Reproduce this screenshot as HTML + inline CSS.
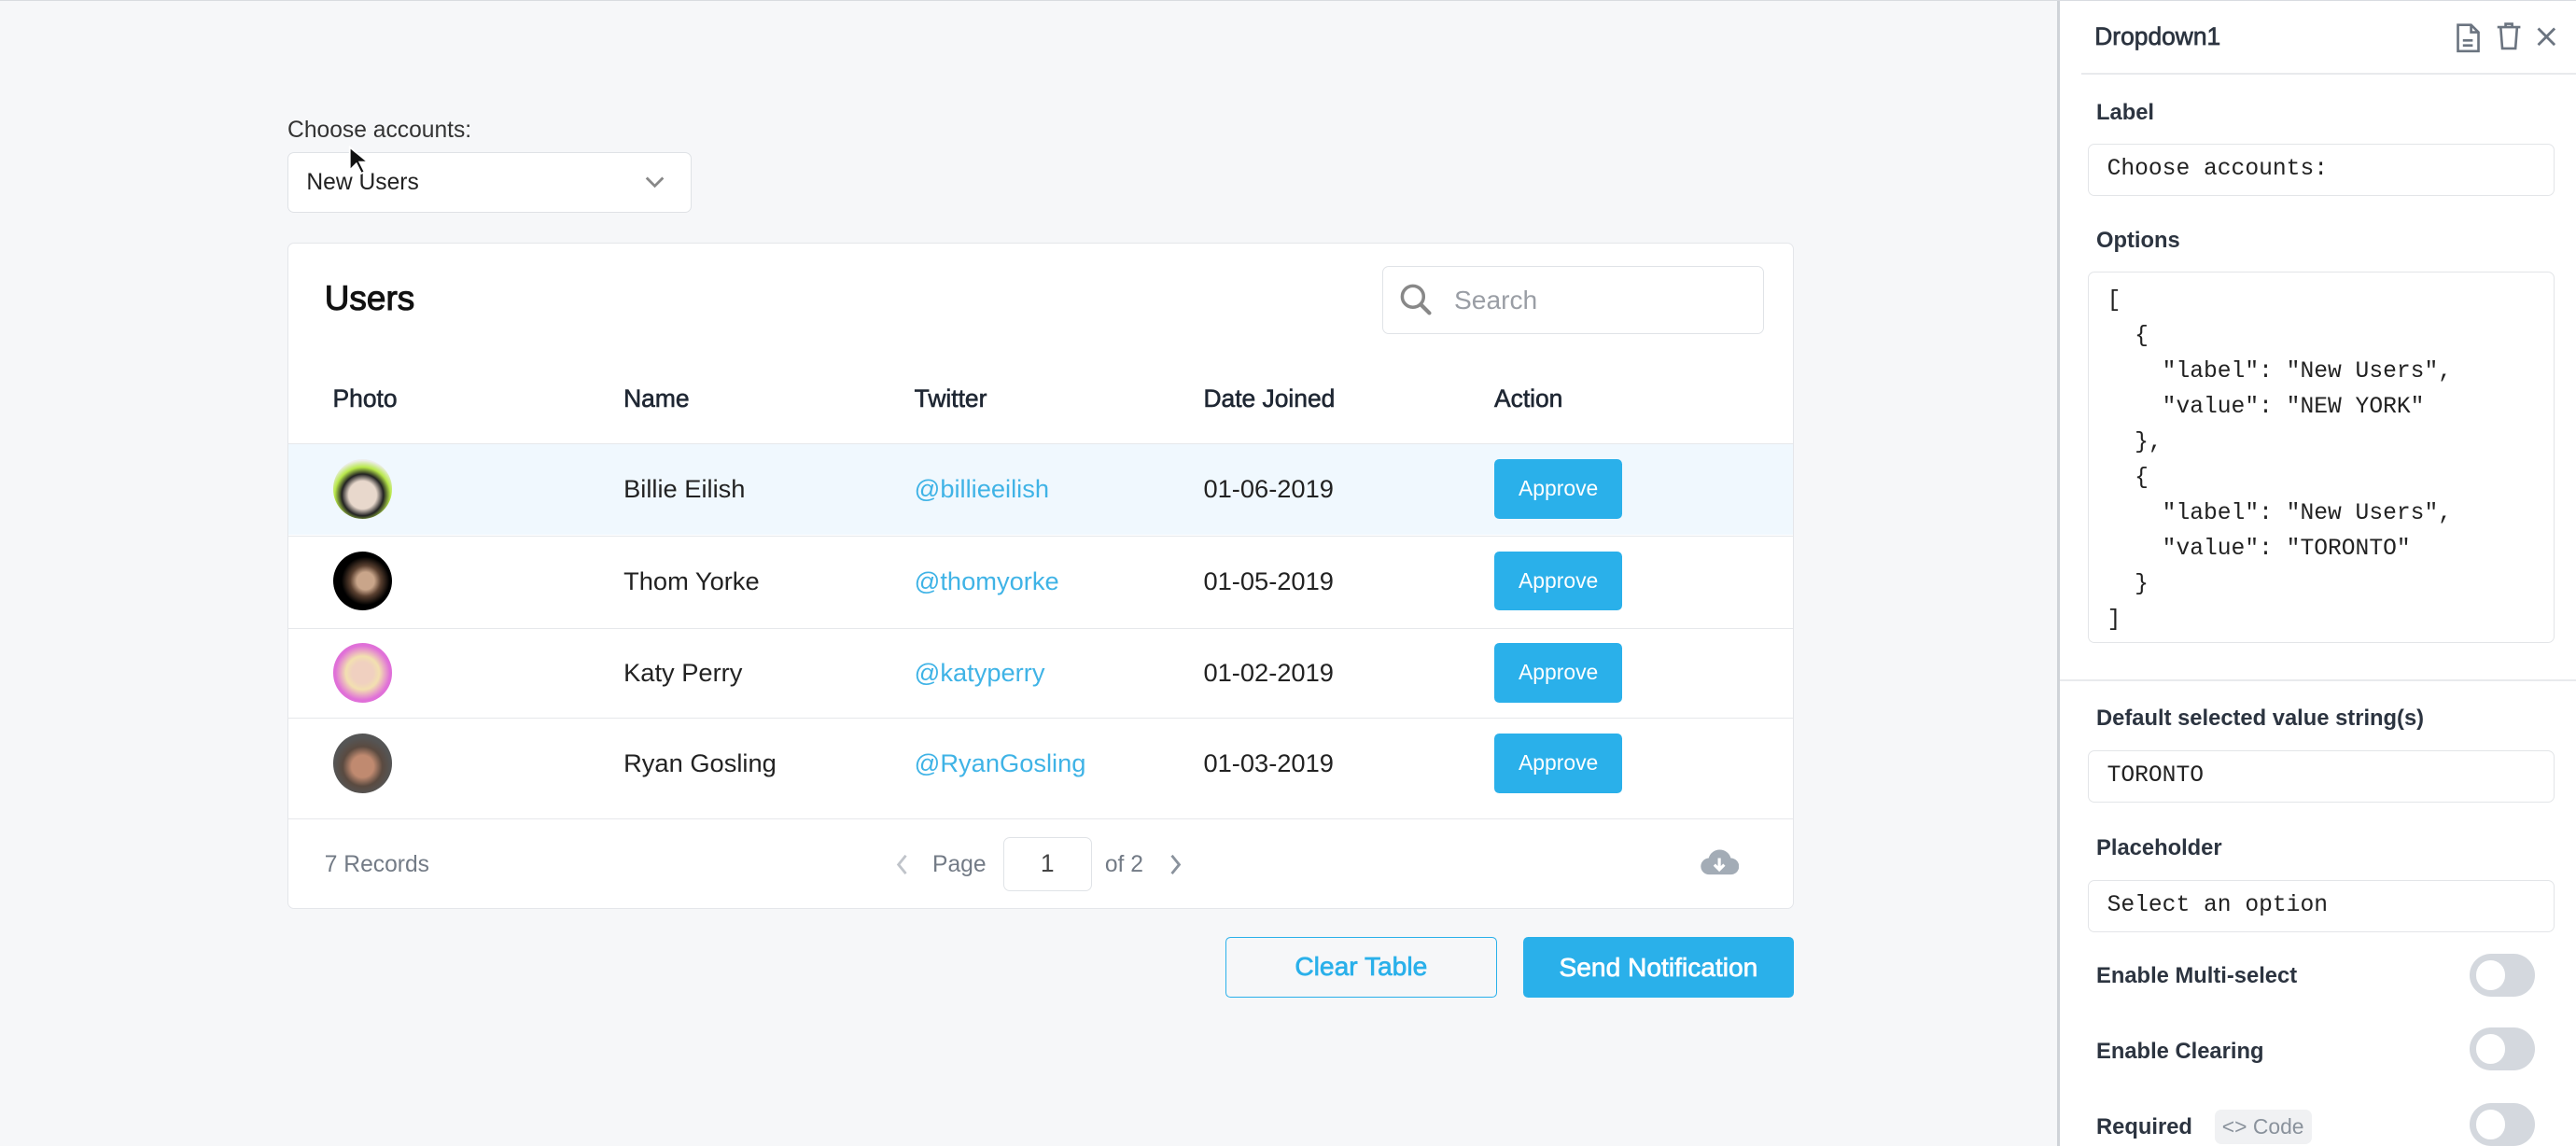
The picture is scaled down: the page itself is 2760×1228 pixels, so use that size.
<!DOCTYPE html>
<html><head><meta charset="utf-8"><style>
html,body{margin:0;padding:0;}
body{width:2760px;height:1226px;overflow:hidden;background:#f6f7f9;font-family:"Liberation Sans",sans-serif;}
#w{zoom:1.7602;width:1568px;height:697px;position:relative;border-top:1px solid #d8dbe0;box-sizing:border-box;}
.a{position:absolute;}
.lbl{font-size:13.5px;font-weight:bold;color:#2c3440;}
.inp{position:absolute;left:1271px;width:284px;background:#fff;border:1px solid #e3e5e8;border-radius:4px;box-sizing:border-box;font-family:"Liberation Mono",monospace;font-size:14px;color:#222;padding-left:11px;}
.tg{position:absolute;left:1503px;width:40px;height:26px;border-radius:13px;background:#d4d8de;}
.tg:after{content:"";position:absolute;left:4px;top:4px;width:18px;height:18px;border-radius:50%;background:#fff;}
.th{position:absolute;top:234px;font-size:15px;color:#1f2733;-webkit-text-stroke:0.35px #1f2733;}
.row{position:absolute;left:0;width:916px;border-top:1px solid #e6e8eb;}
.row span{position:absolute;font-size:15.5px;color:#222;}
.av{position:absolute;left:27px;width:36px;height:36px;border-radius:50%;}
.ap{position:absolute;left:734px;width:78px;height:36px;background:#2ab0ea;border-radius:3px;color:#fff;font-size:13px;text-align:center;line-height:36px;}
.tw{color:#3fb3e6 !important;}
</style></head><body><div id="w">
<div class="a" style="left:175px;top:71px;font-size:14px;color:#333;">Choose accounts:</div>
<div class="a" style="left:175px;top:92px;width:246px;height:37px;background:#fff;border:1px solid #dfe2e6;border-radius:4px;box-sizing:border-box;">
<span class="a" style="left:11px;top:10px;font-size:14px;color:#222;">New Users</span>
<svg class="a" style="left:217px;top:13px" width="12" height="10" viewBox="0 0 12 10"><path d="M1 2l5 5 5-5" stroke="#888" stroke-width="1.6" fill="none"/></svg></div>
<svg class="a" style="left:212px;top:88px" width="12" height="18" viewBox="0 0 12 18"><path d="M1 1v14l4-4 3 6 2-1-3-6h5z" fill="#111" stroke="#fff" stroke-width="1"/></svg>

<div class="a" style="left:175px;top:147px;width:917px;height:406px;background:#fff;border:1px solid #e4e6ea;border-radius:4px;box-sizing:border-box;">
<div class="a" style="left:22px;top:22px;font-size:21px;color:#111;-webkit-text-stroke:0.6px #111;">Users</div>
<div class="a" style="left:666px;top:14px;width:232px;height:41px;border:1px solid #e0e3e7;border-radius:4px;box-sizing:border-box;">
<svg class="a" style="left:9px;top:9px" width="22" height="22" viewBox="0 0 22 22"><circle cx="9" cy="9" r="6.5" stroke="#888" stroke-width="2" fill="none"/><path d="M14 14l5 5" stroke="#888" stroke-width="2.4" stroke-linecap="round"/></svg>
<span class="a" style="left:43px;top:11px;font-size:16px;color:#9a9ea5;">Search</span></div>
<div class="th" style="left:27px;top:86px">Photo</div><div class="th" style="left:204px;top:86px">Name</div><div class="th" style="left:381px;top:86px">Twitter</div><div class="th" style="left:557px;top:86px">Date Joined</div><div class="th" style="left:734px;top:86px">Action</div>
<div class="row" style="top:122px;height:55px;background:#f0f8fe;"><div class="av" style="top:9px;background:radial-gradient(circle at 50% 60%,#e8d8cc 30%,#222 45%,#b8e84a 60%,#eee 75%);"></div><span style="left:204px;top:18px">Billie Eilish</span><span class="tw" style="left:381px;top:18px">@billieeilish</span><span style="left:557px;top:18px">01-06-2019</span><div class="ap" style="top:9px">Approve</div></div>
<div class="row" style="top:178px;height:55px;"><div class="av" style="top:9px;background:radial-gradient(circle at 55% 50%,#c9a58a 20%,#5a4030 35%,#000 55%);"></div><span style="left:204px;top:18px">Thom Yorke</span><span class="tw" style="left:381px;top:18px">@thomyorke</span><span style="left:557px;top:18px">01-05-2019</span><div class="ap" style="top:9px">Approve</div></div>
<div class="row" style="top:234px;height:55px;"><div class="av" style="top:9px;background:radial-gradient(circle at 50% 50%,#f0d0c0 25%,#f2e0b0 40%,#e070d8 65%);"></div><span style="left:204px;top:18px">Katy Perry</span><span class="tw" style="left:381px;top:18px">@katyperry</span><span style="left:557px;top:18px">01-02-2019</span><div class="ap" style="top:9px">Approve</div></div>
<div class="row" style="top:289px;height:61px;"><div class="av" style="top:9px;background:radial-gradient(circle at 50% 55%,#c08a70 25%,#5a4a40 45%,#555 65%);"></div><span style="left:204px;top:18px">Ryan Gosling</span><span class="tw" style="left:381px;top:18px">@RyanGosling</span><span style="left:557px;top:18px">01-03-2019</span><div class="ap" style="top:9px">Approve</div></div>
<div class="row" style="top:350px;height:54px;">
<span style="left:22px;top:20px;font-size:14px;color:#737b86">7 Records</span>
<svg class="a" style="left:370px;top:21px" width="8" height="13" viewBox="0 0 8 13"><path d="M6 1L1.5 6.5 6 12" stroke="#c0c4ca" stroke-width="1.6" fill="none"/></svg>
<span style="left:392px;top:20px;font-size:14px;color:#737b86">Page</span>
<div class="a" style="left:435px;top:11px;width:54px;height:33px;border:1px solid #e0e3e7;border-radius:4px;box-sizing:border-box;text-align:center;line-height:31px;font-size:15px;color:#444;">1</div>
<span style="left:497px;top:20px;font-size:14px;color:#737b86">of 2</span>
<svg class="a" style="left:536px;top:21px" width="8" height="13" viewBox="0 0 8 13"><path d="M2 1l4.5 5.5L2 12" stroke="#8a929c" stroke-width="1.6" fill="none"/></svg>
<svg class="a" style="left:859px;top:18px" width="24" height="18" viewBox="0 0 24 18"><path d="M6 16a5 5 0 0 1-.5-10A7 7 0 0 1 19 6a4.5 4.5 0 0 1 0 10z" fill="#a3acb6"/><path d="M12 6v7M9 10l3 3 3-3" stroke="#fff" stroke-width="1.8" fill="none"/></svg>
</div></div>

<div class="a" style="left:746px;top:570px;width:165px;height:37px;border:1px solid #2ab0ea;border-radius:3px;box-sizing:border-box;text-align:center;line-height:35px;font-size:16px;color:#2ab0ea;-webkit-text-stroke:0.4px #2ab0ea;">Clear Table</div>
<div class="a" style="left:927px;top:570px;width:165px;height:37px;background:#2ab0ea;border-radius:3px;text-align:center;line-height:37px;font-size:16px;color:#fff;-webkit-text-stroke:0.4px #fff;">Send Notification</div>

<div class="a" style="left:1252px;top:0;width:316px;height:697px;background:#fff;border-left:2px solid #cfd3d8;">
<div class="a" style="left:13px;top:44px;width:303px;height:1px;background:#e8eaed;"></div>
<div class="a" style="left:0;top:413px;width:316px;height:1px;background:#e8eaed;"></div>
</div>
<div class="a" style="left:1275px;top:13px;font-size:15px;color:#2c3440;-webkit-text-stroke:0.4px #2c3440;">Dropdown1</div>
<svg class="a" style="left:1494px;top:13px" width="16" height="19" viewBox="0 0 16 19"><path d="M2 1.5h8l4.5 4.5v11.5h-12.5z M10 1.5v4.5h4.5 M5 11h6M5 14h6" stroke="#6b7480" stroke-width="1.5" fill="none"/></svg>
<svg class="a" style="left:1519px;top:12px" width="16" height="19" viewBox="0 0 16 19"><path d="M1 4h14M6 4V2h4v2M3 4l1 13h8l1-13" stroke="#6b7480" stroke-width="1.5" fill="none"/></svg>
<svg class="a" style="left:1543px;top:15px" width="14" height="14" viewBox="0 0 14 14"><path d="M2 2l10 10M12 2L2 12" stroke="#6b7480" stroke-width="1.6"/></svg>
<div class="a lbl" style="left:1276px;top:60px">Label</div>
<div class="inp" style="top:87px;height:32px;line-height:30px;">Choose accounts:</div>
<div class="a lbl" style="left:1276px;top:138px">Options</div>
<div class="inp" style="top:165px;height:226px;padding-top:6px;line-height:21.6px;white-space:pre;">[
  {
    "label": "New Users",
    "value": "NEW YORK"
  },
  {
    "label": "New Users",
    "value": "TORONTO"
  }
]</div>
<div class="a lbl" style="left:1276px;top:429px">Default selected value string(s)</div>
<div class="inp" style="top:456px;height:32px;line-height:30px;">TORONTO</div>
<div class="a lbl" style="left:1276px;top:508px">Placeholder</div>
<div class="inp" style="top:535px;height:32px;line-height:30px;">Select an option</div>
<div class="a lbl" style="left:1276px;top:586px">Enable Multi-select</div><div class="tg" style="top:580px"></div>
<div class="a lbl" style="left:1276px;top:632px">Enable Clearing</div><div class="tg" style="top:625px"></div>
<div class="a lbl" style="left:1276px;top:678px">Required</div>
<div class="a" style="left:1348px;top:675px;width:59px;height:21px;background:#f0f1f3;border-radius:4px;font-size:13px;color:#8a929c;line-height:21px;text-align:center;">&lt;&gt; Code</div>
<div class="tg" style="top:671px"></div>
</div></body></html>
